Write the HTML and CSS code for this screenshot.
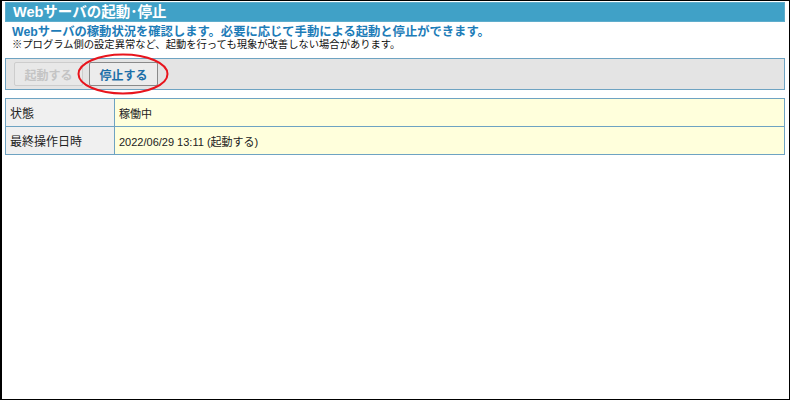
FILE: index.html
```html
<!DOCTYPE html>
<html lang="ja">
<head>
    <meta charset="UTF-8">
    <title>Webサーバの起動･停止</title>
    <link rel="stylesheet" href="styles.css">
</head>
<body>
    <div class="frame">
        <h1 class="title">Webサーバの起動･停止</h1>

        <div class="desc">
            <p class="lead">Webサーバの稼動状況を確認します。必要に応じて手動による起動と停止ができます。</p>
            <p class="note">※プログラム側の設定異常など、起動を行っても現象が改善しない場合があります。</p>
        </div>

        <div class="toolbar">
            <button class="btn" disabled>起動する</button>
            <div class="mark">
                <button class="btn btn-stop">停止する</button>
                <svg class="circle" width="92" height="42" viewBox="0 0 92 42">
                    <ellipse cx="46" cy="21" rx="44.5" ry="19.5" fill="none" stroke="#e8141c" stroke-width="2"/>
                </svg>
            </div>
        </div>

        <table class="info">
            <tr>
                <th>状態</th>
                <td>稼働中</td>
            </tr>
            <tr>
                <th>最終操作日時</th>
                <td>2022/06/29 13:11 (起動する)</td>
            </tr>
        </table>
    </div>
</body>
</html>
```

FILE: styles.css
```css
body {
    margin: 0;
    font-family: "Liberation Sans", "Noto Sans CJK JP", sans-serif;
    color: #222;
    background-color: #fff;
}
.frame {
    width: 790px;
    height: 400px;
    box-sizing: border-box;
    border: 1px solid #000;
    border-left-width: 2px;
    padding: 1px 4px 0 3px;
}
.title {
    margin: 0;
    height: 20px;
    box-sizing: border-box;
    padding-left: 7px;
    background-color: #40a1c7;
    border: 1px solid #5fadcc;
    color: #fff;
    font-size: 14.5px;
    font-weight: bold;
    line-height: 18px;
}
.desc {
    padding: 3px 0 0 7px;
}
.desc p {
    margin: 0;
}
.lead {
    color: #1d7cb8;
    font-size: 12.3px;
    font-weight: bold;
    line-height: 14px;
}
.note {
    font-size: 10.3px;
    line-height: 12px;
    color: #111;
}
.toolbar {
    display: flex;
    align-items: center;
    gap: 6px;
    margin-top: 7px;
    height: 32px;
    box-sizing: border-box;
    padding: 0 8px;
    background-color: #e4e4e4;
    border: 1px solid #6ea3c2;
}
.btn {
    width: 69px;
    height: 24px;
    padding: 0;
    font-family: inherit;
    font-size: 12px;
    font-weight: bold;
    background-color: #e8e8e8;
    border: 1px solid #a8a8a8;
    border-radius: 2px;
}
.btn:disabled {
    color: #c4c4c4;
    border-color: #cdcdcd;
}
.btn-stop {
    color: #1d6fa8;
    background-color: #ececec;
    border-color: #8a8a8a;
}
.mark {
    position: relative;
}
.circle {
    position: absolute;
    left: -12px;
    top: -9px;
}
.info {
    width: 100%;
    margin-top: 8px;
    border-collapse: collapse;
    font-size: 11px;
}
.info th,
.info td {
    height: 27px;
    padding: 0 4px;
    border: 1px solid #6ea3c2;
    text-align: left;
    font-weight: normal;
}
.info th {
    width: 100px;
    background-color: #f0f0f0;
    font-size: 12px;
}
.info td {
    background-color: #ffffdc;
}
```
